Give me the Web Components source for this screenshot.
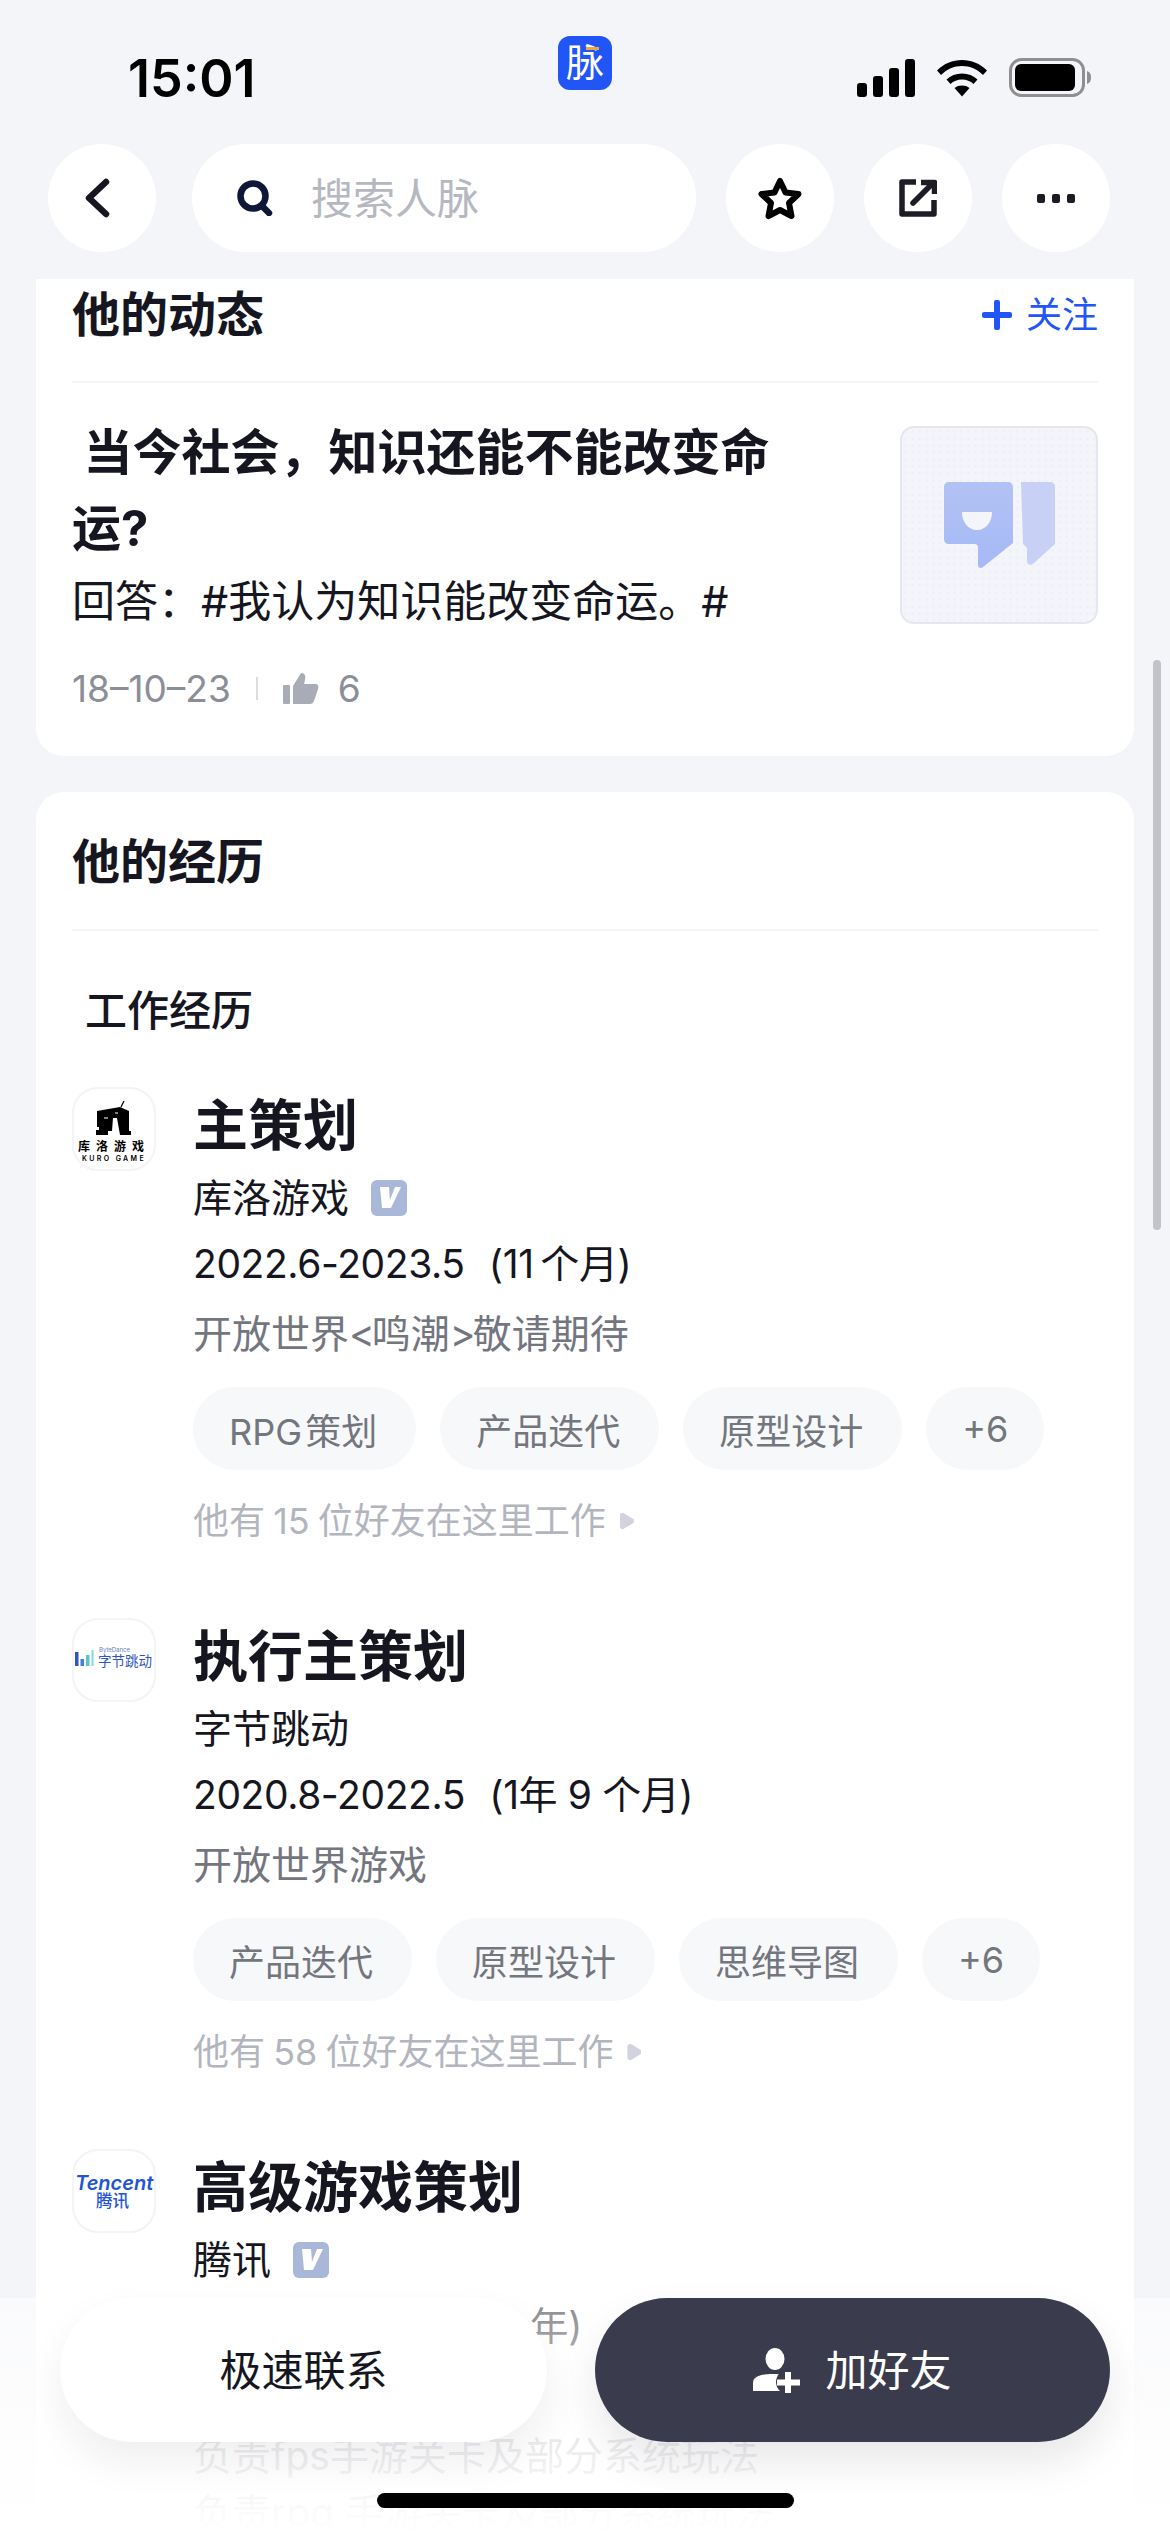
<!DOCTYPE html>
<html lang="zh">
<head>
<meta charset="utf-8">
<style>
  html, body { margin: 0; padding: 0; }
  body {
    width: 1170px; height: 2532px; overflow: hidden; position: relative;
    background: #f4f5f9; color: #15161f;
    font-family: Inter, "Noto Sans CJK SC", sans-serif;
  }
</style>
</head>
<body>
<template id="round-button-tpl">
  <style>
    :host { display: flex; align-items: center; justify-content: center; width: 108px; height: 108px; border-radius: 54px; background: #fff; flex: none; }
    ::slotted(svg) { display: block; }
  </style>
  <slot></slot>
</template>

<template id="exp-item-tpl">
  <style>
    :host { display: grid; grid-template-columns: 84px 1fr; column-gap: 37px; }
    :host([short]) .tags, :host([short]) .friends { display: none; }
    .logo { width: 84px; height: 84px; border: 2px solid #f4f4f7; border-radius: 26px; box-sizing: border-box; overflow: hidden; }
    .main { padding-top: 7px; }
    .title { font-size: 55px; line-height: 62px; font-weight: 700; }
    .company { display: flex; align-items: center; gap: 22px; font-size: 39px; line-height: 50px; margin-top: 17px; }
    .time { font-size: 39px; line-height: 50px; margin-top: 16px; white-space: pre; letter-spacing: -.4px; }
    .desc { font-size: 39px; line-height: 50px; color: #73767f; margin-top: 20px; }
    .tags { display: flex; gap: 24px; margin-top: 28px; }
    .friends { display: flex; align-items: center; gap: 14px; color: #b3b5be; font-size: 36px; line-height: 50px; margin-top: 26px; word-spacing: -2px; }
    .tri { width: 14px; height: 17px; background: #d2d3de; clip-path: polygon(0 10%, 20% 0, 100% 40%, 100% 60%, 20% 100%, 0 90%); }
  </style>
  <div class="logo"><slot name="logo"></slot></div>
  <div class="main">
    <div class="title"><slot name="title"></slot></div>
    <div class="company"><slot name="company"></slot></div>
    <div class="time"><slot name="time"></slot></div>
    <div class="desc"><slot name="desc"></slot></div>
    <div class="tags"><slot name="tags"></slot></div>
    <div class="friends"><slot name="friends"></slot><span class="tri"></span></div>
  </div>
</template>

<script>
  function simple(name, css, html) {
    customElements.define(name, class extends HTMLElement {
      constructor() {
        super();
        this.attachShadow({mode: 'open'});
        this.shadowRoot.innerHTML = `<style>${css}</style>${html}`;
      }
    });
  }
  function fromTemplate(name, id) {
    customElements.define(name, class extends HTMLElement {
      constructor() {
        super();
        this.attachShadow({mode: 'open'});
        this.shadowRoot.appendChild(document.getElementById(id).content.cloneNode(true));
      }
    });
  }

  fromTemplate('round-button', 'round-button-tpl');
  fromTemplate('exp-item', 'exp-item-tpl');

  simple('status-bar', `
    :host { display: flex; align-items: flex-start; height: 144px; padding: 0 79px 0 128px; }
    .time { width: 430px; margin-top: 48px; font: 600 52px/62px Inter, sans-serif; color: #000; flex: none; }
    .app { position: relative; margin-top: 36px; width: 54px; height: 54px; border-radius: 12px; background: #2255f6; color: #fff; font-size: 38px; line-height: 52px; text-align: center; flex: none; }
    .app i { position: absolute; left: 28px; top: 11px; width: 13px; height: 3px; background: #f0a63c; }
    .icons { margin: 58px 0 0 auto; display: flex; align-items: center; gap: 22px; }
    svg { display: block; }
  `, `
    <span class="time">15:01</span>
    <span class="app">脉<i></i></span>
    <span class="icons">
      <svg width="58" height="38" viewBox="0 0 58 38"><rect x="0" y="24" width="10" height="14" rx="3"/><rect x="16" y="17" width="10" height="21" rx="3"/><rect x="32" y="9" width="10" height="29" rx="3"/><rect x="48" y="0" width="10" height="38" rx="3"/></svg>
      <svg width="50" height="38" viewBox="0 0 50 38"><path d="M0 11.5C7 4.5 15.5 1 25 1s18 3.5 25 10.5l-4 4.5C40 10 33 7 25 7S10 10 4 16Z"/><path d="M9.5 20.5C13.5 16.5 19 14.5 25 14.5s11.5 2 15.5 6l-4 4.5C33.5 22.2 29.5 20.5 25 20.5s-8.5 1.7-11.5 4.5Z"/><path d="M17.5 29C19.5 27.3 22 26.5 25 26.5s5.5.8 7.5 2.5L25 37.5Z"/></svg>
      <svg width="82" height="39" viewBox="0 0 82 39"><rect x="1.5" y="1.5" width="73" height="36" rx="11" fill="none" stroke="#8f8f92" stroke-width="3"/><rect x="6" y="6" width="60" height="27" rx="6"/><path d="M78 13c3 1 4 3 4 6.5s-1 5.5-4 6.5Z" fill="#8f8f92"/></svg>
    </span>
  `);

  simple('nav-bar', `
    :host { display: flex; align-items: center; gap: 30px; padding: 0 60px 0 48px; height: 108px; }
    .search { width: 504px; height: 108px; margin-left: 6px; box-sizing: border-box; border-radius: 54px; background: #fff; display: flex; align-items: center; gap: 38px; padding: 0 0 0 45px; font-size: 42px; color: #b6b8c1; flex: none; }
    .search span { margin-top: -5px; }
    svg { flex: none; }
  `, `
    <slot name="back"></slot>
    <div class="search">
      <svg width="36" height="36" viewBox="0 0 36 36" fill="none" stroke="#0f1738" stroke-width="6.5"><circle cx="16" cy="16" r="12.5"/><path d="M25 26l7 7" stroke-linecap="round"/></svg>
      <span>搜索人脉</span>
    </div>
    <slot></slot>
  `);

  simple('plain-card', `
    :host { display: block; background: #fff; margin: 0 36px; padding: 0 36px; border-radius: 28px; }
  `, `<slot></slot>`);

  simple('card-head', `
    :host { display: flex; align-items: center; justify-content: space-between; border-bottom: 2px solid #f3f4f6; font-size: 48px; font-weight: 700; box-sizing: border-box; }
    .right { font-size: 36px; font-weight: 400; color: #2255f6; display: flex; align-items: center; gap: 10px; }
  `, `<span><slot></slot></span><span class="right"><slot name="action"></slot></span>`);

  simple('tag-pill', `
    :host { display: flex; align-items: center; height: 83px; padding: 0 39px 0 36px; border-radius: 42px; background: #f7f8fa; color: #74767e; font-size: 36px; flex: none; white-space: nowrap; word-spacing: -7px; }
    :host([narrow]) { padding: 0 36px; }
  `, `<slot></slot>`);

  simple('v-badge', `
    :host { display: inline-flex; width: 36px; height: 36px; border-radius: 6px; background: #a9b7d9; flex: none; }
  `, `<svg width="36" height="36" viewBox="0 0 36 36"><path d="M9 7h9l1 13 5-13h6L20 28h-9Z" fill="#fff"/></svg>`);

  simple('bottom-bar', `
    :host { position: absolute; left: 0; right: 0; bottom: 0; height: 234px; background: linear-gradient(rgba(255,255,255,.5), rgba(255,255,255,.86) 62%, #fff); display: block; }
    .row { display: flex; gap: 48px; padding: 0 60px; }
    .btn { height: 144px; border-radius: 72px; display: flex; align-items: center; justify-content: center; font-size: 42px; box-sizing: border-box; }
    .btn span { margin-top: -5px; }
    .a { width: 487px; background: #fff; color: #15161f; box-shadow: 0 20px 40px rgba(30,32,50,.07); }
    .b { width: 515px; background: #3a3b4c; color: #fff; gap: 25px; box-shadow: 0 20px 40px rgba(30,32,50,.1); }
    .home { position: absolute; left: 377px; top: 195px; width: 417px; height: 15px; border-radius: 8px; background: #000; }
  `, `
    <div class="row">
      <div class="btn a"><span>极速联系</span></div>
      <div class="btn b">
        <svg width="47" height="45" viewBox="0 0 47 45"><ellipse cx="22" cy="11" rx="9.5" ry="11" fill="#fff"/><path d="M0 43V35c0-6 7-9 20-9 8 0 13 2 15 5v12Z" fill="#fff"/><circle cx="35" cy="34" r="12" fill="#3a3b4c"/><path d="M35 24v21M24 34.5h23" stroke="#fff" stroke-width="6"/></svg>
        <span>加好友</span>
      </div>
    </div>
    <div class="home"></div>
  `);
</script>

<status-bar></status-bar>
<nav-bar>
  <round-button slot="back"><svg width="30" height="40" viewBox="0 0 30 40" fill="none" stroke="#15161f" stroke-width="6.5" stroke-linecap="round" stroke-linejoin="round" style="margin-left:-8px"><path d="M23 4 6 20l17 16"/></svg></round-button>
  <round-button><svg width="44" height="43" viewBox="0 0 44 43" fill="none" stroke="#000" stroke-width="6" stroke-linejoin="round"><path d="M22 4l5.5 11.5 13 1.5-9.5 9 2.5 13L22 33l-11.5 6L13 26l-9.5-9 13-1.5Z"/></svg></round-button>
  <round-button><svg width="38" height="38" viewBox="0 0 38 38" fill="none" stroke="#1c1d24" stroke-width="5.5" stroke-linejoin="round"><path d="M17 3H3v32h32V21"/><path d="M14 24 33 5" stroke-linecap="round"/><path d="M22 3.5h13.5V15"/></svg></round-button>
  <round-button><svg width="38" height="9" viewBox="0 0 38 9" fill="#1c1d24"><rect width="8" height="9" rx="2"/><rect x="15" width="8" height="9" rx="2"/><rect x="30" width="8" height="9" rx="2"/></svg></round-button>
</nav-bar>
<div style="height:27px"></div>

<plain-card style="border-radius:0 0 28px 28px;height:477px;box-sizing:border-box">
  <card-head style="height:104px;align-items:flex-start;line-height:72px">他的动态
    <span slot="action" style="display:flex;align-items:center"><svg width="30" height="30" viewBox="0 0 30 30" fill="#2255f6" style="margin-right:14px"><rect x="12" width="6" height="30" rx="2"/><rect y="12" width="30" height="6" rx="2"/></svg>关注</span>
  </card-head>
  <feed-row></feed-row>
</plain-card>
<div style="height:36px"></div>

<plain-card style="height:1800px;box-sizing:border-box">
  <card-head style="height:139px;padding-bottom:5px">他的经历</card-head>
  <section-label>工作经历</section-label>
  <exp-list>
    <exp-item>
      <svg slot="logo" width="80" height="80" viewBox="2 2 80 80" style="display:block">
        <path d="M49 20 52 14" stroke="#000" stroke-width="1.2"/>
        <path d="M25 24 48 20 57 24V44H59V48H48L45 31H41L40 44H36V48H24V43H27V40H25Z"/>
        <path d="M32 31h4M43 26h3" stroke="#fff" stroke-width="1"/>
        <text x="42" y="64" font-size="12" font-weight="700" text-anchor="middle" font-family="Noto Sans CJK SC" letter-spacing="6">库洛游戏</text>
        <text x="42" y="74" font-size="7" font-weight="600" text-anchor="middle" font-family="Inter" letter-spacing="2.4">KURO GAME</text>
      </svg>
      <span slot="title">主策划</span>
      <span slot="company">库洛游戏</span><v-badge slot="company"></v-badge>
      <span slot="time">2022.6-2023.5  &#8202;(11&#8201;个月)</span>
      <span slot="desc">开放世界<span style="letter-spacing:-3px">&lt;</span>鸣潮<span style="letter-spacing:-3px">&gt;</span>敬请期待</span>
      <tag-pill slot="tags">RPG 策划</tag-pill><tag-pill slot="tags">产品迭代</tag-pill><tag-pill slot="tags">原型设计</tag-pill><tag-pill slot="tags" narrow>+6</tag-pill>
      <span slot="friends">他有 15 位好友在这里工作</span>
    </exp-item>
    <exp-item>
      <svg slot="logo" width="80" height="80" viewBox="2 2 80 80" style="display:block">
        <rect x="3" y="34" width="3.5" height="14" fill="#2f55c0"/><rect x="8.5" y="41" width="3.5" height="7" fill="#3f7fd8"/><rect x="14" y="37" width="3.5" height="11" fill="#5ec3c9"/><rect x="19.5" y="32" width="2" height="16" fill="#7fdcd0"/>
        <text x="27" y="34" font-size="6" fill="#5f7fc0" font-family="Inter">ByteDance</text>
        <text x="26" y="48" font-size="13.5" fill="#2f55c0" font-family="Noto Sans CJK SC">字节跳动</text>
      </svg>
      <span slot="title">执行主策划</span>
      <span slot="company">字节跳动</span>
      <span slot="time">2020.8-2022.5  &#8202;(1年 9 个月)</span>
      <span slot="desc">开放世界游戏</span>
      <tag-pill slot="tags">产品迭代</tag-pill><tag-pill slot="tags">原型设计</tag-pill><tag-pill slot="tags">思维导图</tag-pill><tag-pill slot="tags" narrow>+6</tag-pill>
      <span slot="friends">他有 58 位好友在这里工作</span>
    </exp-item>
    <exp-item short>
      <svg slot="logo" width="80" height="80" viewBox="2 2 80 80" style="display:block">
        <text x="3" y="41" font-size="20" font-style="italic" font-weight="600" fill="#2255d6" font-family="Inter">Tencent</text>
        <text x="24" y="58" font-size="16.5" font-weight="500" fill="#2255d6" font-family="Noto Sans CJK SC">腾讯</text>
      </svg>
      <span slot="title">高级游戏策划</span>
      <span slot="company">腾讯</span><v-badge slot="company"></v-badge>
      <span slot="time">2017.5-2020.8  &#8202;(3 &#8201;年)</span>
      <span slot="desc" style="display:block;padding-top:60px">负责fps手游关卡及部分系统玩法</span>
      <span slot="desc" style="display:block;margin-top:7px">负责rpg 手游关卡及部分系统玩法</span>
    </exp-item>
  </exp-list>
</plain-card>

<page-scroll></page-scroll>
<bottom-bar></bottom-bar>

<script>
  simple('feed-row', `
    :host { display: flex; justify-content: space-between; }
    .text { padding-top: 32px; }
    .q { width: 720px; font-size: 49px; line-height: 76px; font-weight: 700; white-space: pre-wrap; }
    .a { font-size: 43px; line-height: 54px; margin-top: 7px; white-space: nowrap; }
    .meta { display: flex; align-items: center; color: #8b8e97; font-size: 37px; margin-top: 35px; height: 50px; }
    .sep { width: 2px; height: 23px; background: #dcdde2; margin: 0 25px; }
    .pic { width: 198px; height: 198px; box-sizing: border-box; border: 2px solid #e6e7ee; border-radius: 14px; background: #f4f5fa radial-gradient(#eef0f8 1px, transparent 1.5px) 0 0 / 7px 7px; display: flex; align-items: center; justify-content: center; margin-top: 43px; flex: none; }
  `, `
    <div class="text">
      <div class="q"> 当今社会，知识还能不能改变命运?</div>
      <div class="a">回答：#我认为知识能改变命运。#</div>
      <div class="meta">18–10–23<span class="sep"></span>
        <svg width="36" height="31" viewBox="0 0 36 31" fill="#a9acb6" style="margin-right:19px"><rect y="12" width="7" height="19" rx="1"/><path d="M10 13 18 0c4 0 5 3 4 7l-1 4h11c3 0 4 2 3 5l-4 12c-1 2-2 3-4 3H10Z"/></svg>
        6
      </div>
    </div>
    <div class="pic">
      <svg width="111" height="87" viewBox="0 0 111 87">
        <defs><linearGradient id="bubble" x1="0" y1="0" x2="0" y2="1"><stop offset="0" stop-color="#b2c2f4"/><stop offset="1" stop-color="#a5b9f6"/></linearGradient></defs>
        <path d="M5 0h59c3 0 5 2 5 5v56L39 85c-2 2-5 1-5-2V66c0-3-1-4-4-4H5c-3 0-5-2-5-5V5c0-3 2-5 5-5Z" fill="url(#bubble)"/>
        <path d="M18 30h30c0 10-6 18-15 18S18 40 18 30Z" fill="#f4f5fa"/>
        <path d="M77 0h29c3 0 5 2 5 5v57L90 81c-3 3-7 2-7-2V66l-4-4Z" fill="#c8d0f5"/>
      </svg>
    </div>
  `);
  simple('section-label', `
    :host { display: block; font-size: 42px; font-weight: 500; line-height: 56px; padding: 52px 0 0 13px; }
  `, `<slot></slot>`);
  simple('exp-list', `
    :host { display: flex; flex-direction: column; gap: 72px; margin-top: 48px; }
  `, `<slot></slot>`);
  simple('page-scroll', `
    :host { position: absolute; left: 1153px; top: 660px; width: 8px; height: 570px; border-radius: 4px; background: #c2c3c8; }
  `, ``);
</script>
</body>
</html>
